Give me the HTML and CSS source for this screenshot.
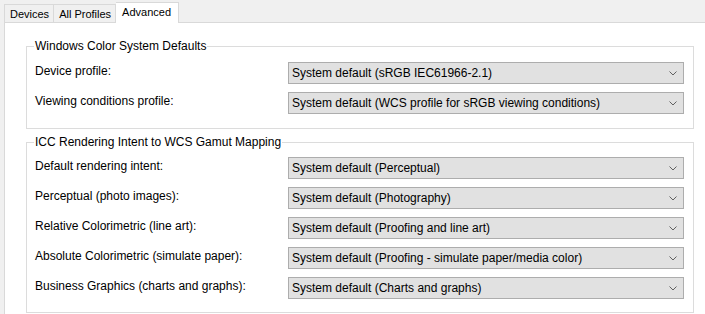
FILE: index.html
```html
<!DOCTYPE html>
<html lang="en">
<head>
    <meta charset="UTF-8">
    <title>Color Management - Advanced</title>
    <link rel="stylesheet" href="styles.css">
</head>
<body>
    <div class="tabs">
        <div class="tab">Devices</div>
        <div class="tab">All Profiles</div>
        <div class="tab active">Advanced</div>
    </div>

    <div class="panel">
        <fieldset class="group first">
            <legend>Windows Color System Defaults</legend>
            <div class="rows">
                <label>Device profile:</label>
                <div class="combo"><span>System default (sRGB IEC61966-2.1)</span><svg class="chevron" viewBox="0 0 8 5"><path d="M0.5 0.5 L4 4 L7.5 0.5"/></svg></div>

                <label>Viewing conditions profile:</label>
                <div class="combo"><span>System default (WCS profile for sRGB viewing conditions)</span><svg class="chevron" viewBox="0 0 8 5"><path d="M0.5 0.5 L4 4 L7.5 0.5"/></svg></div>
            </div>
        </fieldset>

        <fieldset class="group second">
            <legend>ICC Rendering Intent to WCS Gamut Mapping</legend>
            <div class="rows">
                <label>Default rendering intent:</label>
                <div class="combo"><span>System default (Perceptual)</span><svg class="chevron" viewBox="0 0 8 5"><path d="M0.5 0.5 L4 4 L7.5 0.5"/></svg></div>

                <label>Perceptual (photo images):</label>
                <div class="combo"><span>System default (Photography)</span><svg class="chevron" viewBox="0 0 8 5"><path d="M0.5 0.5 L4 4 L7.5 0.5"/></svg></div>

                <label>Relative Colorimetric (line art):</label>
                <div class="combo"><span>System default (Proofing and line art)</span><svg class="chevron" viewBox="0 0 8 5"><path d="M0.5 0.5 L4 4 L7.5 0.5"/></svg></div>

                <label>Absolute Colorimetric (simulate paper):</label>
                <div class="combo"><span>System default (Proofing - simulate paper/media color)</span><svg class="chevron" viewBox="0 0 8 5"><path d="M0.5 0.5 L4 4 L7.5 0.5"/></svg></div>

                <label>Business Graphics (charts and graphs):</label>
                <div class="combo"><span>System default (Charts and graphs)</span><svg class="chevron" viewBox="0 0 8 5"><path d="M0.5 0.5 L4 4 L7.5 0.5"/></svg></div>
            </div>
        </fieldset>
    </div>
</body>
</html>
```

FILE: styles.css
```css
* {
    margin: 0;
    padding: 0;
    box-sizing: border-box;
}

body {
    background: #f0f0f0;
    color: #000;
    font-family: 'Liberation Sans', Arial, sans-serif;
    font-size: 12px;
    height: 314px;
    overflow: hidden;
}

/* Tab strip */
.tabs {
    display: flex;
    align-items: flex-end;
    height: 22px;
    padding-left: 4px;
    font-size: 11px;
}

.tab {
    height: 18px;
    line-height: 18px;
    padding: 0 4px 0 5px;
    border: 1px solid #d9d9d9;
    border-bottom: none;
    border-left: none;
    background: #f0f0f0;
}

.tab:first-child {
    border-left: 1px solid #d9d9d9;
}

.tab.active {
    position: relative;
    z-index: 1;
    height: 21px;
    margin-bottom: -1px;
    line-height: 19px;
    padding: 0 7px 0 6px;
    background: #fff;
}

/* Page body */
.panel {
    margin-left: 4px;
    height: 292px;
    background: #fff;
    border-top: 1px solid #d9d9d9;
    border-left: 1px solid #d9d9d9;
    padding: 16px 11px 0 21px;
}

.group {
    border: 1px solid #dcdcdc;
    padding: 0 9px 14px 8px;
}

.group.second {
    margin-top: 6px;
    padding-bottom: 13px;
}

.group legend {
    line-height: 14px;
    padding: 0 1px;
    margin-left: -1px;
}

.rows {
    display: grid;
    grid-template-columns: 253px 1fr;
    grid-auto-rows: 22px;
    row-gap: 8px;
    padding-top: 9px;
}

.second .rows {
    padding-top: 8px;
}

.rows label {
    line-height: 19px;
}

.combo {
    display: flex;
    align-items: center;
    justify-content: space-between;
    border: 1px solid #adadad;
    background: #e1e1e1;
    padding: 0 6px 0 3px;
    line-height: 18px;
    white-space: nowrap;
}

.chevron {
    width: 8px;
    height: 5px;
    fill: none;
    stroke: #606060;
    stroke-width: 1;
}
```
